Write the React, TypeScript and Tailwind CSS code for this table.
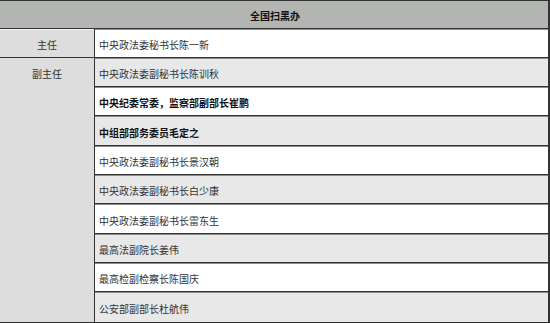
import React from "react";

const rows: { text: string; bold?: boolean; h: string }[] = [
  { text: "中央政法委副秘书长陈训秋", h: "h-[29px]" },
  { text: "中央纪委常委，监察部副部长崔鹏", bold: true, h: "h-[29px]" },
  { text: "中组部部务委员毛定之", bold: true, h: "h-[30px]" },
  { text: "中央政法委副秘书长景汉朝", h: "h-[29px]" },
  { text: "中央政法委副秘书长白少康", h: "h-[29px]" },
  { text: "中央政法委副秘书长雷东生", h: "h-[30px]" },
  { text: "最高法副院长姜伟", h: "h-[29px]" },
  { text: "最高检副检察长陈国庆", h: "h-[29px]" },
  { text: "公安部副部长杜航伟", h: "h-[30px]" },
];

export default function App() {
  const font = { fontFamily: '"Noto Sans CJK SC", "Noto Sans", sans-serif' };
  return (
    <div className="w-[550px] h-[323px] bg-[#dcdcdc] overflow-hidden" style={font}>
      <div className="h-[29px] bg-[#b3b5b3] border-t border-b border-r-2 border-[#333] flex items-center justify-center text-[10px] font-bold text-[#111] pl-[2px] pt-[1px]">
        全国扫黑办
      </div>
      <div className="flex border-b-2 border-[#2e2e2e]">
        <div className="w-[95px] bg-[#dcdddc] border-r border-[#333] flex flex-col text-[10px] text-[#333]">
          <div className="h-[29px] border-t border-[#f0f0f0] border-b border-b-[#333] flex items-center justify-center pt-[2px]">主任</div>
          <div className="flex-1 flex justify-center pt-[11px] leading-none">副主任</div>
        </div>
        <div className="flex-1 flex flex-col border-r-2 border-[#333] text-[10px] text-[#333]">
          <div className="h-[29px] bg-white border-t border-[#8c8c8c] border-b border-b-[#333] flex items-center pl-[4px] pt-[2px]">
            中央政法委秘书长陈一新
          </div>
          {rows.map((r, i) => (
            <div
              key={i}
              className={`${r.h} ${i % 2 === 0 ? "bg-[#e8e8e8]" : "bg-white"} ${i === rows.length - 1 ? "" : "border-b border-b-[#333]"} border-t border-t-[#8c8c8c] flex items-center pl-[4px] pt-[2px] ${r.bold ? "font-bold text-[#111]" : ""}`}
            >
              {r.text}
            </div>
          ))}
        </div>
      </div>
    </div>
  );
}
